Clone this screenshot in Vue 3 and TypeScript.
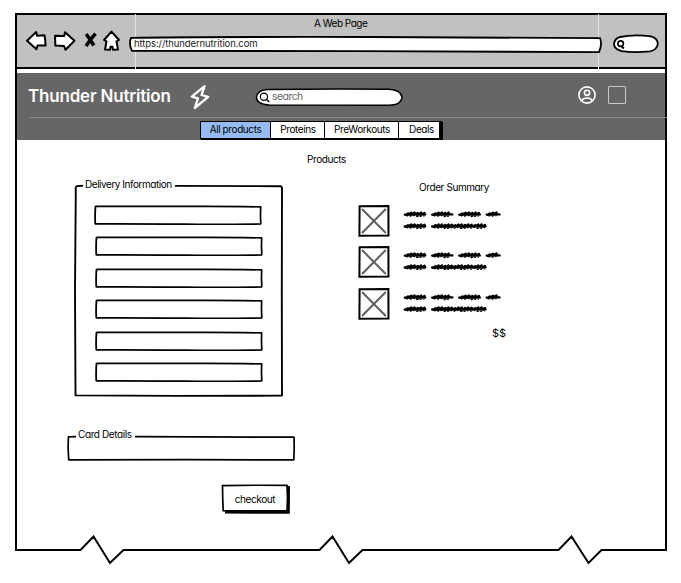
<script setup lang="ts">
interface Tab { label: string; width: number }

const tabs: Tab[] = [
  { label: 'All products', width: 70 },
  { label: 'Proteins', width: 54 },
  { label: 'PreWorkouts', width: 74 },
  { label: 'Deals', width: 42 },
]
const fields = [0, 1, 2, 3, 4, 5]
const items = [0, 1, 2]

// One hand-scribbled word: a thick core with restless loops over it.
function scribble(x: number, y: number, end: number): string {
  let d = `M${x} ${y + 0.4} L${end} ${y + 0.2} M${x + 1} ${y + 0.6}`
  const up = [-0.8, -1.5, -1.7, -1.1, -1.6, -1.3]
  const down = [1.1, 1.4, 0.9, 1.8, 1.6]
  let i = 0
  for (let px = x + 3.2; px < end - 0.5; px += 3.3) {
    d += ` L${px} ${y + up[i % up.length]} L${px - 0.7} ${y + down[i % down.length]}`
    i++
  }
  return d
}
const words: [number, number, number][] = [
  [1.8, 3.2, 22.2], [29.2, 3.2, 49.3], [56.2, 3.2, 76.8], [83.7, 3.2, 96.5],
  [1.8, 15.1, 22.2], [29.2, 15.1, 82.5],
]
</script>

<template>
  <div class="page">
    <header class="chrome">
      <i class="seam seam-a"></i>
      <i class="seam seam-b"></i>
      <div class="title">A Web Page</div>
      <div class="toolbar">
        <svg class="nav" width="96" height="26" viewBox="0 0 96 26">
          <g fill="#fff" stroke="#000" stroke-width="2" stroke-linejoin="round">
            <path d="M1 12.7 L10.2 4 L11 7.8 L18.5 7.2 L19.2 12 L19.5 17.6 L11.5 17.4 L10.5 21.3 Z" />
            <path d="M29 7.8 L38.2 8 L39 4.2 L48.5 12.7 L39.5 21.7 L38 17.9 L29.4 17.6 Z" />
            <path d="M78 12 L85.5 3.6 L93 12 L90.5 13.4 L92 21.6 L87 21.8 L86.5 18.8 L84.5 18.8 L84 21.8 L79 21.6 L80.5 13.4 Z" />
          </g>
          <path d="M60.2 6 Q64 11 67.8 17.5 M69.5 5.6 Q65.5 10 60 18" fill="none" stroke="#000" stroke-width="3.6" />
        </svg>
        <div class="address">
          <svg class="sketch" width="474" height="18" viewBox="0 0 474 18">
            <path d="M2 1.8 Q50 .8 240 1 L471 2.2 Q473.5 8 470 16.1 L230 15.2 L3 14.8 Q-.5 8 2 1.8Z" fill="#fff" stroke="#000" stroke-width="1.8" />
          </svg>
          <span class="url">https://thundernutrition.com</span>
        </div>
        <svg class="lookup" width="46" height="20" viewBox="0 0 46 20">
          <path d="M7 3 Q21 .2 38 2.4 Q44.6 4 44.8 10 Q44 16 37 17.3 Q21 19 9 17.2 Q1 15 1 10 Q2 4 7 3Z" fill="#fff" stroke="#000" stroke-width="1.8" />
          <circle cx="7.6" cy="9.6" r="2.8" fill="none" stroke="#000" stroke-width="1.7" />
          <path d="M8.5 12.2 L10.8 14.5" stroke="#000" stroke-width="2" />
        </svg>
      </div>
    </header>

    <div class="body">
      <section class="banner">
        <div class="bar">
          <h1>Thunder Nutrition</h1>
          <svg class="bolt" width="20" height="26" viewBox="0 0 20 26">
            <path d="M14.6 2.2 L1.8 12.6 L8 14.4 L4.8 24 L18.2 12.8 L11.5 11 Z" fill="none" stroke="#fff" stroke-width="2.3" stroke-linejoin="round" />
          </svg>
          <div class="search">
            <svg class="sketch" width="148" height="19" viewBox="0 0 148 19">
              <path d="M12 1.4 Q70 .8 134 1.2 Q146 2 147.2 9.3 Q146 17 134 17.3 L14 17 Q1.5 16 1.5 9.5 Q2 2 12 1.4Z" fill="#fff" stroke="#000" stroke-width="1.5" />
              <circle cx="8.9" cy="8.7" r="3.6" fill="none" stroke="#000" stroke-width="1.2" />
              <path d="M11.4 11.2 L14.2 14" stroke="#000" stroke-width="1.4" />
            </svg>
            <span class="query">search</span>
          </div>
          <svg class="user" width="18" height="18" viewBox="0 0 18 18" fill="none" stroke="#fff" stroke-width="1.6">
            <circle cx="9" cy="9" r="8.1" />
            <circle cx="9" cy="6.8" r="2.6" />
            <path d="M3.8 14.6 Q5 12 9 12 Q13 12 14.2 14.6" />
          </svg>
          <i class="cart"></i>
        </div>
        <nav class="tabs">
          <div v-for="(t, i) in tabs" :key="t.label" class="tab" :class="{ active: i === 0 }" :style="{ width: t.width + 'px' }">
            <span>{{ t.label }}</span>
          </div>
        </nav>
      </section>

      <h2>Products</h2>

      <main class="columns">
        <section class="left">
          <div class="delivery">
            <svg class="sketch" width="210" height="213" viewBox="0 0 210 213" fill="none" stroke="#000" stroke-linejoin="round">
              <path d="M9 1.8 L3 2.1 Q1.3 2.2 1.8 7 L1 106 L1.5 211.4 L105 211.9 L208 211.6 L207.8 110 L208 6 Q208.5 2.2 206 2.2 L101 1.9" stroke-width="1.9" />
            </svg>
            <div class="legend">Delivery Information</div>
            <div class="fields">
              <svg v-for="f in fields" :key="f" class="field" :class="{ first: f === 0 }" width="168" height="20" viewBox="0 0 168 20" fill="none" stroke="#000">
                <path d="M1.2 1.4 Q50 1.6 92 1.4 T166.5 1.9" stroke-width="1.7" />
                <path d="M166.7 1.3 Q166.2 10 166.8 19.4" stroke-width="1.7" />
                <path d="M1 18.8 Q60 18.7 90 19.1 T167 19" stroke-width="1.7" />
                <path d="M1.5 1 Q.8 10 1.3 19.3" stroke-width="1.8" />
              </svg>
            </div>
          </div>
          <div class="card">
            <svg class="sketch" width="229" height="26" viewBox="0 0 229 26">
              <path d="M9 1.7 L1.4 1.8 L1.1 13 L1.7 24.8 L120 24.6 L226.8 24.9 L227.2 13 L227 2.2 L130 1.9 L68 1.7" fill="none" stroke="#000" stroke-width="1.7" stroke-linejoin="round" />
            </svg>
            <div class="legend">Card Details</div>
          </div>
          <div class="checkout">
            <svg class="sketch" width="70" height="31" viewBox="0 0 70 31">
              <path d="M4 4 L67 1.8 L69 2.4 L68.8 29.8 L4 29.5Z" />
              <path d="M1.5 1.6 Q34 1 66 1.4 L66.5 14 L66 26.9 L2.2 26.7 Q1.6 14 1.5 1.6Z" fill="#fff" stroke="#000" stroke-width="1.7" />
            </svg>
            <span>checkout</span>
          </div>
        </section>

        <section class="right">
          <h3>Order Summary</h3>
          <div v-for="n in items" :key="n" class="item">
            <svg width="32" height="32" viewBox="0 0 32 32" fill="none">
              <path d="M1.6 1.2 L30.4 1 L30.5 30.4 L1.4 30.8Z" stroke="#000" stroke-width="2" />
              <path d="M4 4 L27.8 28 M27.8 4 L4 28" stroke="#5f5f5f" stroke-width="2" />
            </svg>
            <svg width="102" height="32" viewBox="0 -6 102 32" fill="none" stroke="#000" stroke-linejoin="round" stroke-linecap="round">
              <path v-for="(w, i) in words" :key="i" :d="scribble(w[0], w[1], w[2])" stroke-width="2.4" />
            </svg>
          </div>
          <div class="total">$$</div>
        </section>
      </main>
    </div>

    <svg class="torn" width="655" height="34" viewBox="0 0 655 34">
      <path d="M2 0 V15 H66.5 L79.5 1.5 L96 28 L109.5 15 H305.5 L318.5 1.5 L335 28 L348.5 15 H544.5 L557.5 1.5 L574.5 28 L587.5 15 H652 V0" fill="none" stroke="#000" stroke-width="2" />
    </svg>
  </div>
</template>

<style>
body { background: #fff; overflow: hidden; }
</style>

<style scoped>
.page {
  box-sizing: border-box;
  width: 681px;
  height: 583px;
  padding: 13px 0 0 14px;
  font: 10px/14px Inter, "Open Sans", sans-serif;
  font-feature-settings: "cv11", "ss03";
  letter-spacing: -.4px;
  color: #000;
  white-space: nowrap;
}
h1, h2, h3 { margin: 0; font-weight: 400; }
.sketch { position: absolute; left: 0; top: 0; display: block; overflow: visible; }
svg { display: block; flex: none; }
.chrome {
  box-sizing: border-box;
  position: relative;
  width: 652px;
  height: 56px;
  margin-left: 1px;
  background: #c1c1c1;
  border: 2px solid #000;
}
.title { height: 17px; padding: 1px 0 0 297px; box-sizing: border-box; letter-spacing: -.5px; }
.toolbar { position: relative; display: flex; align-items: flex-start; }
.nav { margin: -4px 0 0 9px; }
.address { position: relative; width: 474px; height: 18px; margin: 4px 0 0 7px; }
.url { position: relative; display: block; padding: 1px 0 0 5px; font-size: 9.5px; letter-spacing: -.1px; color: #222; }
.lookup { margin: 2px 0 0 10px; }
.seam { position: absolute; top: -1px; width: 1px; height: 55px; background: #e3e3e3; }
.seam-a { left: 118px; }
.seam-b { left: 581px; }
.body {
  box-sizing: border-box;
  width: 652px;
  height: 466px;
  margin-left: 1px;
  padding-top: 4px;
  border-left: 2px solid #000;
  border-right: 2px solid #000;
}
.banner { height: 67px; background: #666; }
.bar { display: flex; align-items: flex-start; height: 44px; margin: 0 -2px 0 12px; border-bottom: 1px solid #8c8c8c; }
h1 { width: 143px; margin: 12px 0 0 -1px; color: #fff; font-size: 17px; line-height: 22px; font-weight: 600; letter-spacing: -.2px; }
.bolt { margin: 11px 0 0 19px; }
.search { position: relative; width: 148px; height: 19px; margin: 15px 0 0 45px; }
.query { position: relative; display: block; padding: 2px 0 0 17px; color: #666; letter-spacing: -.55px; font-size: 10.5px; line-height: 13px; }
.user { margin: 13px 0 0 175px; }
.cart { box-sizing: border-box; width: 18px; height: 18px; margin: 13px 0 0 12px; border: 1px solid #c9c9c9; border-radius: 1px; }
.tabs { display: flex; width: 242px; height: 18px; margin: 3px 0 0 183px; border: 1px solid #000; box-shadow: 1px 1px 0 #000; box-sizing: border-box; }
.tab { box-sizing: border-box; flex: none; height: 16px; border-right: 1px solid #000; background: #fff; text-align: center; line-height: 15px; }
.tab:last-child { border-right: 2px solid #000; padding-left: 5px; }
.tab:nth-child(2), .tab:nth-child(3) { padding-left: 1px; }
.active { background: #95bbf2; }
h2 { height: 14px; margin: 12px 0 0 290px; font-size: 10px; }
.columns { display: flex; margin-top: 11px; }
.left { width: 282px; }
.delivery { position: relative; width: 210px; height: 213px; margin: 7px 0 0 57px; }
.legend { position: relative; top: -7px; padding-left: 11px; line-height: 14px; }
.delivery .legend { letter-spacing: -.46px; }
.fields { display: flex; flex-direction: column; gap: 11.6px; padding: 6.5px 0 0 21px; }
.field.first { margin-left: -1px; }
.card { position: relative; width: 229px; height: 26px; margin: 38px 0 0 50px; }
.card .legend { top: -8px; }
.checkout { position: relative; width: 70px; height: 31px; margin: 23px 0 0 204px; text-align: center; line-height: 30px; }
.checkout span { position: relative; left: -1px; }
.right { width: 200px; padding-left: 59px; }
h3 { height: 14px; margin: 3px 0 11px 61px; font-size: 10px; }
.item { display: flex; gap: 13px; height: 41.4px; }
.total { padding-left: 134px; margin-top: -3px; font-size: 11px; letter-spacing: 0; }
</style>
